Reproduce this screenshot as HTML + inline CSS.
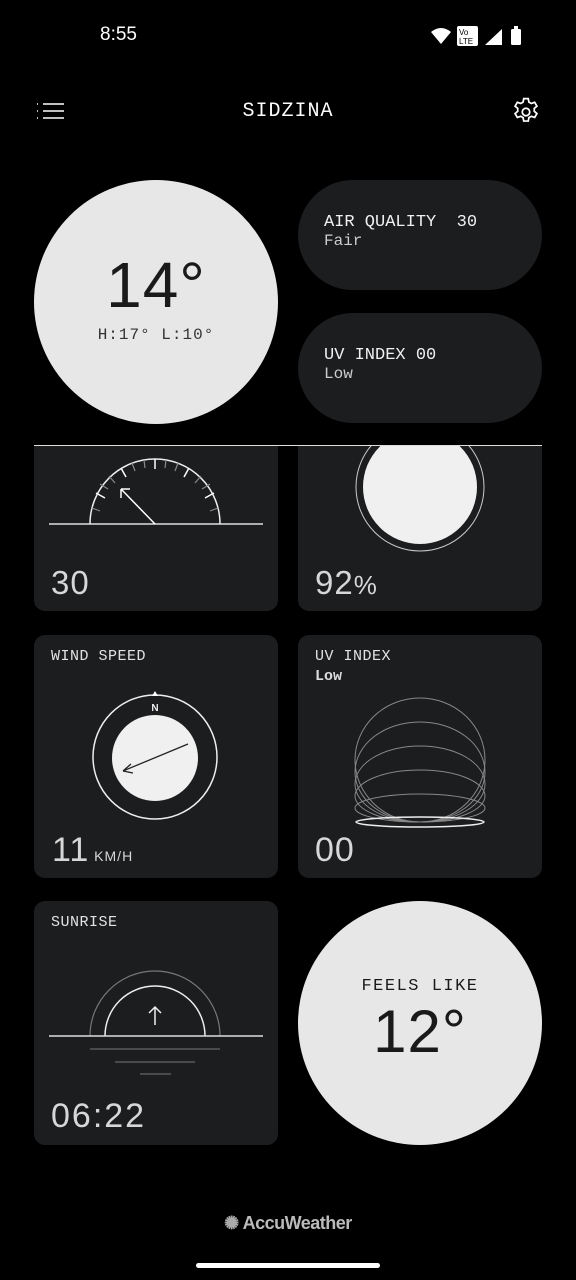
<!DOCTYPE html>
<html><head><meta charset="utf-8"><style>
*{margin:0;padding:0;box-sizing:border-box}
body{width:576px;height:1280px;background:#000;position:relative;overflow:hidden;font-family:"Liberation Mono",monospace;color:#e8e9e8}
.abs{position:absolute}
.card{position:absolute;background:#1c1d1f;border-radius:11px;overflow:hidden}
.pill{position:absolute;background:#1c1d1f;border-radius:56px;left:298px;width:244px;height:110px}
.lbl{font-size:15px;letter-spacing:0.5px;color:#e2e3e2}
.big{font-family:"Liberation Sans",sans-serif;color:#d6d7d6;letter-spacing:1px}
</style></head><body>
<div class="abs" style="left:100px;top:24px;font-family:'Liberation Sans',sans-serif;font-size:19px;color:#fff">8:55</div>
<svg class="abs" style="left:428px;top:24px" width="100" height="24">
<path d="M3 8 Q13 0 23 8 L13 20Z" fill="#fff"/>
<rect x="29" y="2" width="21" height="20" rx="2" fill="#fff"/>
<text x="31" y="11" font-size="8" font-family="Liberation Sans" fill="#000">Vo</text>
<text x="31" y="20" font-size="8" font-family="Liberation Sans" fill="#000">LTE</text>
<path d="M57 21 L74 21 L74 5Z" fill="#fff"/>
<rect x="83" y="5" width="10" height="16" rx="1.5" fill="#fff"/><rect x="86" y="2" width="4" height="3" fill="#fff"/>
</svg>
<svg class="abs" style="left:36px;top:102px" width="30" height="20" stroke="#fff" stroke-width="1.6">
<path d="M1 2h1M1 9h1M1 16h1M7 2h21M7 9h21M7 16h21"/></svg>
<div class="abs" style="left:0;width:576px;top:100px;text-align:center;font-size:20px;letter-spacing:1px;color:#fff">SIDZINA</div>
<svg class="abs" style="left:510px;top:96px" width="32" height="32" viewBox="0 0 24 24" fill="none" stroke="#fff" stroke-width="1.3"><path d="M10.3 2h3.4l.5 2.6 1.8 1 2.5-.9 1.7 2.9-2 1.7v2.2l2 1.7-1.7 2.9-2.5-.9-1.8 1-.5 2.6h-3.4l-.5-2.6-1.8-1-2.5.9-1.7-2.9 2-1.7V9.3l-2-1.7 1.7-2.9 2.5.9 1.8-1z"/><circle cx="12" cy="12" r="2.8"/></svg>

<div class="abs" style="left:34px;top:180px;width:244px;height:244px;border-radius:50%;background:#e6e7e6;color:#1a1a1a;text-align:center">
<div class="big" style="color:#1a1a1a;font-size:64px;margin-top:70px;line-height:70px;font-weight:300">14°</div>
<div style="font-size:16px;letter-spacing:1px;margin-top:6px;color:#333">H:17° L:10°</div></div>
<div class="pill" style="top:180px"><div style="margin:33px 0 0 26px;font-size:17px;color:#f0f0f0;white-space:pre">AIR QUALITY  30</div><div style="margin-left:26px;font-size:16px;color:#ccc">Fair</div></div>
<div class="pill" style="top:313px"><div style="margin:33px 0 0 26px;font-size:17px;color:#f0f0f0">UV INDEX 00</div><div style="margin-left:26px;font-size:16px;color:#ccc">Low</div></div>

<div class="abs" style="left:34px;top:445px;width:508px;height:1px;background:#ddd"></div>

<div class="card" style="left:34px;top:446px;width:244px;height:165px;border-top-left-radius:0;border-top-right-radius:0">
<svg class="abs" style="left:0;top:-46px" width="244" height="211">
<line x1="15" y1="124" x2="229" y2="124" stroke="#ddd" stroke-width="1.5"/>
<path d="M56 124 A65 65 0 0 1 186 124" fill="none" stroke="#eee" stroke-width="1.5"/>
<g stroke="#888" stroke-width="1.2">
<line x1="121" y1="59" x2="121" y2="69" stroke="#fff" stroke-width="1.5"/>
<line x1="87" y1="68" x2="92" y2="77" stroke="#fff" stroke-width="1.5"/>
<line x1="155" y1="68" x2="150" y2="77" stroke="#fff" stroke-width="1.5"/>
<line x1="62" y1="93" x2="71" y2="98" stroke="#fff" stroke-width="1.5"/>
<line x1="180" y1="93" x2="171" y2="98" stroke="#fff" stroke-width="1.5"/>
<line x1="58" y1="108" x2="66" y2="111"/><line x1="66" y1="84" x2="74" y2="89"/><line x1="75" y1="76" x2="81" y2="83"/>
<line x1="98" y1="63" x2="101" y2="71"/><line x1="110" y1="60" x2="111" y2="68"/><line x1="132" y1="60" x2="131" y2="68"/><line x1="144" y1="63" x2="141" y2="71"/>
<line x1="167" y1="76" x2="161" y2="83"/><line x1="176" y1="84" x2="168" y2="89"/><line x1="184" y1="108" x2="176" y2="111"/></g>
<path d="M121 124 L87 89 M87 89 v9 M87 89 h9" stroke="#fff" stroke-width="1.5" fill="none"/></svg>
<div class="big abs" style="left:17px;top:118px;font-size:33px">30</div></div>

<div class="card" style="left:298px;top:446px;width:244px;height:165px;border-top-left-radius:0;border-top-right-radius:0">
<svg class="abs" style="left:0;top:-46px" width="244" height="211">
<circle cx="122" cy="87" r="64" fill="none" stroke="#ccc" stroke-width="1"/>
<circle cx="122" cy="87" r="57" fill="#eff0ef"/></svg>
<div class="big abs" style="left:17px;top:118px;font-size:33px">92<span style="font-size:26px">%</span></div></div>

<div class="card" style="left:34px;top:635px;width:244px;height:243px">
<div class="lbl abs" style="left:17px;top:13px">WIND SPEED</div>
<svg class="abs" style="left:0;top:0" width="244" height="243">
<circle cx="121" cy="122" r="62" fill="none" stroke="#eee" stroke-width="1.5"/>
<path d="M118 61 L121 56 L124 61Z" fill="#fff"/>
<text x="121" y="76" font-size="10" font-family="Liberation Sans" fill="#eee" text-anchor="middle" font-weight="bold">N</text>
<circle cx="121" cy="123" r="43" fill="#eff0ef"/>
<path d="M154 109 L89 136 M89 136 l8 -7 M89 136 l10 2" stroke="#222" stroke-width="1.3" fill="none"/></svg>
<div class="big abs" style="left:18px;top:196px;font-size:34px">11<span style="font-size:14px;font-family:'Liberation Sans'"> KM/H</span></div></div>

<div class="card" style="left:298px;top:635px;width:244px;height:243px">
<div class="lbl abs" style="left:17px;top:13px">UV INDEX</div>
<div class="abs" style="left:17px;top:33px;font-size:15px;font-weight:bold;color:#ddd">Low</div>
<svg class="abs" style="left:0;top:0" width="244" height="243" fill="none" stroke="#888" stroke-width="1">
<ellipse cx="122" cy="125" rx="65" ry="62"/>
<ellipse cx="122" cy="137" rx="65" ry="50"/>
<ellipse cx="122" cy="149" rx="65" ry="38"/>
<ellipse cx="122" cy="161" rx="65" ry="26"/>
<ellipse cx="122" cy="173" rx="65" ry="14"/>
<ellipse cx="122" cy="187" rx="64" ry="5" stroke="#eee" stroke-width="1.5"/></svg>
<div class="big abs" style="left:17px;top:196px;font-size:34px">00</div></div>

<div class="card" style="left:34px;top:901px;width:244px;height:244px">
<div class="lbl abs" style="left:17px;top:13px">SUNRISE</div>
<svg class="abs" style="left:0;top:0" width="244" height="244" fill="none">
<path d="M56 135 A65 65 0 0 1 186 135" stroke="#777" stroke-width="1.2"/>
<path d="M71 135 A50 50 0 0 1 171 135" stroke="#eee" stroke-width="1.5"/>
<line x1="15" y1="135" x2="229" y2="135" stroke="#ddd" stroke-width="1.5"/>
<path d="M121 124 V106 M115 112 L121 106 L127 112" stroke="#eee" stroke-width="1.5"/>
<line x1="56" y1="148" x2="186" y2="148" stroke="#777"/>
<line x1="81" y1="161" x2="161" y2="161" stroke="#777"/>
<line x1="106" y1="173" x2="137" y2="173" stroke="#777"/></svg>
<div class="big abs" style="left:17px;top:196px;font-size:34px;letter-spacing:2px">06:22</div></div>

<div class="abs" style="left:298px;top:901px;width:244px;height:244px;border-radius:50%;background:#e6e7e6;text-align:center;color:#1a1a1a">
<div style="font-size:17px;letter-spacing:1.5px;margin-top:76px">FEELS LIKE</div>
<div class="big" style="color:#1a1a1a;font-size:60px;line-height:64px;margin-top:4px">12°</div></div>

<div class="abs" style="left:0;width:576px;top:1213px;text-align:center;font-family:'Liberation Sans',sans-serif;font-size:18px;font-weight:bold;color:#bbb;letter-spacing:-0.5px"><span style="color:#aaa">✺</span> AccuWeather</div>
<div class="abs" style="left:196px;top:1263px;width:184px;height:5px;border-radius:3px;background:#fff"></div>
</body></html>
